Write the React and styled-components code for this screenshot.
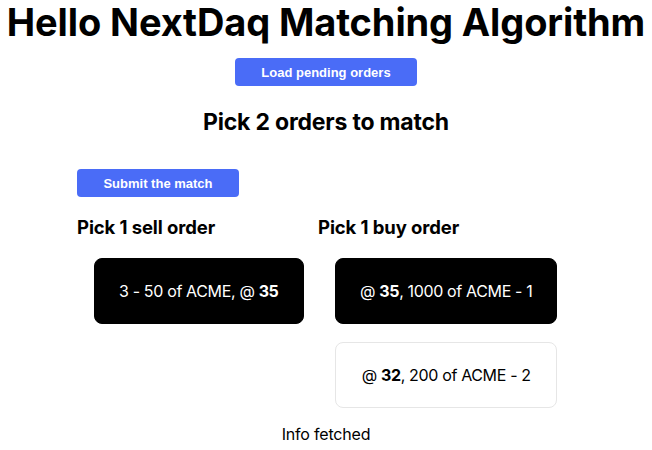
import React, { useState } from "react";
import styled, { createGlobalStyle } from "styled-components";

const GlobalStyle = createGlobalStyle`
  body {
    margin: 0;
    background: #ffffff;
    color: #000000;
    font-family: Inter, "Noto Sans", sans-serif;
  }
`;

const Page = styled.div`
  display: flex;
  flex-direction: column;
  align-items: center;
`;

const Title = styled.h1`
  margin: 0;
  font-size: 38px;
  line-height: 44px;
  font-weight: 700;
  letter-spacing: -0.12px;
  white-space: nowrap;
`;

const Button = styled.button`
  margin-top: ${(p) => p.$top || 0}px;
  height: 28px;
  width: ${(p) => p.$width}px;
  padding: 0;
  border: none;
  border-radius: 4px;
  background-color: #4a6cf7;
  color: #ffffff;
  font-family: "Liberation Sans", Arial, sans-serif;
  font-size: 13px;
  font-weight: 700;
  cursor: pointer;
`;

const SubTitle = styled.h2`
  margin: 22px 0 0;
  font-size: 23px;
  line-height: 28px;
  font-weight: 700;
  letter-spacing: -0.2px;
`;

const MatchArea = styled.div`
  align-self: stretch;
  padding: 33px 0 0 77px;
  display: flex;
  flex-direction: column;
  align-items: flex-start;
`;

const Columns = styled.div`
  display: grid;
  grid-template-columns: 241px 241px;
  margin-top: 18px;
`;

const Column = styled.div`
  display: flex;
  flex-direction: column;
  align-items: flex-start;
`;

const ColumnTitle = styled.h3`
  margin: 0;
  font-size: 18.5px;
  line-height: 24px;
  font-weight: 700;
  letter-spacing: -0.1px;
`;

const CardList = styled.div`
  display: flex;
  flex-direction: column;
  gap: 18px;
  margin: 19px 0 0 17px;
`;

const Card = styled.div`
  box-sizing: border-box;
  height: 66px;
  padding: 0 24px;
  display: flex;
  align-items: center;
  justify-content: center;
  border-radius: 8px;
  border: 1px solid ${(p) => (p.$selected ? "#000000" : "#e6e6e6")};
  background: ${(p) => (p.$selected ? "#000000" : "#ffffff")};
  color: ${(p) => (p.$selected ? "#ffffff" : "#000000")};
  font-size: 16px;
  letter-spacing: -0.35px;
  white-space: nowrap;
  cursor: pointer;
`;

const Status = styled.div`
  margin-top: 16px;
  font-size: 16px;
  line-height: 20px;
  letter-spacing: -0.2px;
`;

const sellOrders = [{ id: 3, qty: 50, symbol: "ACME", price: 35 }];
const buyOrders = [
  { id: 1, qty: 1000, symbol: "ACME", price: 35 },
  { id: 2, qty: 200, symbol: "ACME", price: 32 },
];

export default function App() {
  const [sell, setSell] = useState(3);
  const [buy, setBuy] = useState(1);

  return (
    <Page>
      <GlobalStyle />
      <Title>Hello NextDaq Matching Algorithm</Title>
      <Button $top={14} $width={182}>Load pending orders</Button>
      <SubTitle>Pick 2 orders to match</SubTitle>
      <MatchArea>
        <Button $width={162}>Submit the match</Button>
        <Columns>
          <Column>
            <ColumnTitle>Pick 1 sell order</ColumnTitle>
            <CardList>
              {sellOrders.map((o) => (
                <Card key={o.id} $selected={sell === o.id} onClick={() => setSell(o.id)}>
                  {o.id} - {o.qty} of {o.symbol},&nbsp;@&nbsp;<b>{o.price}</b>
                </Card>
              ))}
            </CardList>
          </Column>
          <Column>
            <ColumnTitle>Pick 1 buy order</ColumnTitle>
            <CardList>
              {buyOrders.map((o) => (
                <Card key={o.id} $selected={buy === o.id} onClick={() => setBuy(o.id)}>
                  @&nbsp;<b>{o.price}</b>, {o.qty} of {o.symbol} - {o.id}
                </Card>
              ))}
            </CardList>
          </Column>
        </Columns>
      </MatchArea>
      <Status>Info fetched</Status>
    </Page>
  );
}
